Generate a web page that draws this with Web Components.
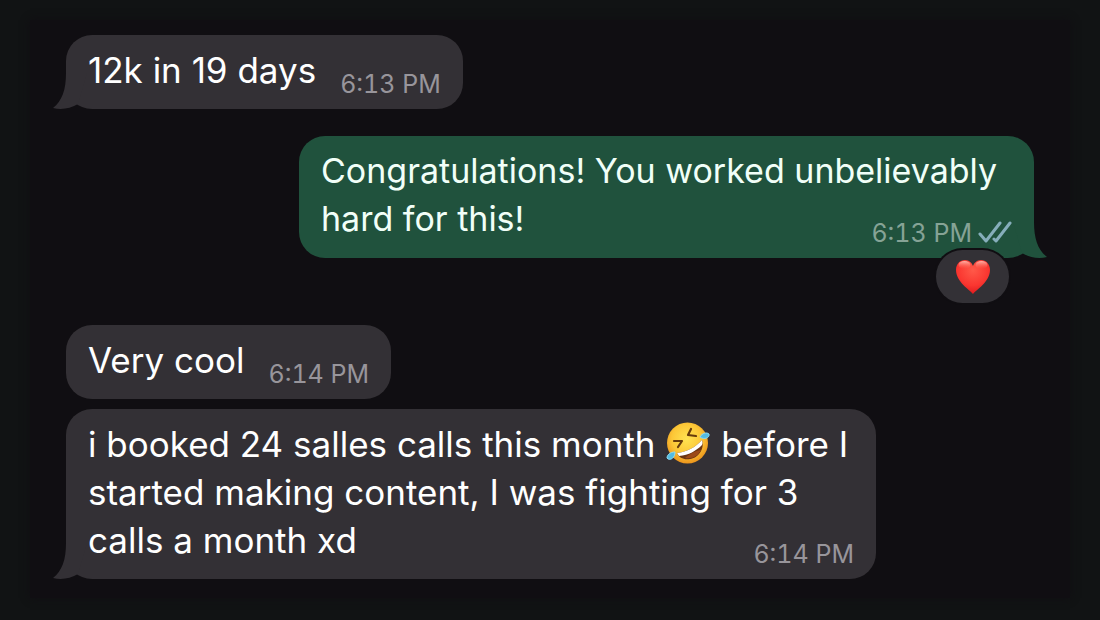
<!DOCTYPE html>
<html lang="en">
<head>
<meta charset="utf-8">
<meta name="viewport" content="width=device-width, initial-scale=1">
<title>Chat</title>
<style>
  body {
    margin: 0;
    background: #111314;
    font-family: Inter, "Liberation Sans", sans-serif;
  }
</style>
</head>
<body>

<chat-thread>
  <chat-bubble tail time="6:13 PM">12k in 19 days</chat-bubble>
  <chat-bubble class="reply" sent tail long read time="6:13 PM">Congratulations! You worked unbelievably hard for this!<heart-reaction slot="reaction"></heart-reaction></chat-bubble>
  <chat-bubble class="later" time="6:14 PM">Very cool</chat-bubble>
  <chat-bubble class="next" tail long time="6:14 PM">i booked 24 salles calls this month <rofl-emoji></rofl-emoji> before I started making content, I was fighting for 3 calls a month xd</chat-bubble>
</chat-thread>

<script>
const threadTemplate = document.createElement("template");
threadTemplate.innerHTML = `
  <style>
    :host {
      display: block;
      box-sizing: border-box;
      min-height: 100vh;
      padding: 20px 30px 22px;
    }
    main {
      display: flex;
      flex-direction: column;
      align-items: flex-start;
      box-sizing: border-box;
      min-height: calc(100vh - 42px);
      padding: 15px 36px 18px;
      background: #100e12;
      box-shadow: 0 0 8px #100e12;
    }
    ::slotted(.reply) {
      align-self: flex-end;
      margin-top: 27px;
      max-width: 735px;
    }
    ::slotted(.later) {
      margin-top: 67px;
    }
    ::slotted(.next) {
      margin-top: 10px;
      max-width: 810px;
    }
  </style>
  <main><slot></slot></main>
`;

const bubbleTemplate = document.createElement("template");
bubbleTemplate.innerHTML = `
  <style>
    :host {
      --fill: #333035;
      --meta: #98959b;
      display: block;
      position: relative;
      box-sizing: border-box;
      padding: 11px 22px 15px;
      border-radius: 26px;
      background: var(--fill);
      color: #fff;
      font-size: 35px;
      line-height: 48px;
    }
    :host([sent]) {
      --fill: #20523d;
      --meta: #86a396;
      color: #f1fff8;
      font-size: 34px;
    }
    .body {
      display: flex;
      align-items: flex-end;
      gap: 24px;
    }
    p {
      margin: 0;
    }
    /* the time shares the last line of a wrapped message */
    :host([long]) .body {
      display: grid;
    }
    :host([long]) p,
    :host([long]) .meta {
      grid-area: 1 / 1;
    }
    .meta {
      display: flex;
      align-items: center;
      justify-self: end;
      gap: 6px;
      color: var(--meta);
      font-size: 25px;
      font-variant-numeric: tabular-nums;
      line-height: 20px;
      white-space: nowrap;
    }
    .ticks {
      display: none;
      width: 34px;
      height: 22px;
      margin: -2px 0 0;
    }
    :host([read]) .ticks {
      display: block;
    }
    .tail {
      display: none;
      position: absolute;
      bottom: 0;
      left: -13px;
      width: 36px;
      height: 36px;
      fill: var(--fill);
    }
    :host([tail]) .tail {
      display: block;
    }
    :host([sent]) .tail {
      left: auto;
      right: -13px;
      transform: scaleX(-1);
    }
    ::slotted([slot="reaction"]) {
      position: absolute;
      right: 25px;
      bottom: -45px;
    }
  </style>
  <svg class="tail" viewBox="0 0 36 36" aria-hidden="true"><path d="M13 0C13 17 9 28 0 35Q13 38 25 31L34 0Z"/></svg>
  <div class="body">
    <p><slot></slot></p>
    <div class="meta">
      <time></time>
      <svg class="ticks" viewBox="0 0 34 22" fill="none" stroke="#86aebb" stroke-width="3" stroke-linecap="round" stroke-linejoin="round" role="img" aria-label="Read"><path d="M2 13L8 20L22 2M16 18L18 20L32 2"/></svg>
    </div>
  </div>
  <slot name="reaction"></slot>
`;

const heartTemplate = document.createElement("template");
heartTemplate.innerHTML = `
  <style>
    :host {
      display: flex;
      align-items: center;
      justify-content: center;
      width: 73px;
      height: 53px;
      border-radius: 27px;
      background: #333136;
      box-shadow: 0 0 0 2px #100e12;
    }
    svg {
      width: 36px;
      height: 36px;
    }
  </style>
  <svg viewBox="0 0 36 36" role="img" aria-label="Red heart">
    <defs>
      <radialGradient id="red" cx=".5" cy=".3" r=".75">
        <stop offset="0" stop-color="#ff5949"/>
        <stop offset=".6" stop-color="#fa3630"/>
        <stop offset="1" stop-color="#d9151b"/>
      </radialGradient>
      <linearGradient id="shine" x2="0" y2="1">
        <stop offset="0" stop-color="#ffc0b5" stop-opacity=".9"/>
        <stop offset="1" stop-color="#ff6a5a" stop-opacity="0"/>
      </linearGradient>
    </defs>
    <path fill="url(#red)" d="M18 35C15 31 1 23 1 11C1 5 5 1 10 1C14 1 17 4 18 7C19 4 22 1 26 1C31 1 35 5 35 11C35 23 21 31 18 35Z"/>
    <ellipse cx="9.500" cy="6" rx="6" ry="4" fill="url(#shine)"/>
    <ellipse cx="26.500" cy="6" rx="6" ry="4" fill="url(#shine)"/>
  </svg>
`;

const roflTemplate = document.createElement("template");
roflTemplate.innerHTML = `
  <style>
    :host {
      display: inline-block;
      width: 46px;
      height: 46px;
      vertical-align: middle;
      margin: -12px 0 -4px;
    }
    svg {
      display: block;
      width: 100%;
      height: 100%;
    }
  </style>
  <svg viewBox="0 0 46 46" role="img" aria-label="Rolling on the floor laughing">
    <defs>
      <radialGradient id="face" cx=".48" cy=".4" r=".6">
        <stop offset="0" stop-color="#ffe352"/>
        <stop offset=".6" stop-color="#fcc737"/>
        <stop offset="1" stop-color="#ec941c"/>
      </radialGradient>
    </defs>
    <circle cx="22.500" cy="23" r="20.500" fill="url(#face)"/>
    <g fill="none" stroke="#673b0c" stroke-width="2.200" stroke-linecap="round" stroke-linejoin="round">
      <path d="M9 21L17 21L13 27"/>
      <path d="M26 9L23 15L31 16"/>
    </g>
    <path fill="#6b3512" d="M12 33C22 32 31 27 37 20C40 29 33 38 25 39C19 40 14 38 12 33Z"/>
    <path fill="#fff" d="M12 33C22 32 31 27 37 20Q38 23 37 25C31 31 24 35 14 36Z"/>
    <path fill="#9c4a18" d="M20 38C24 34 32 30 36 30C33 36 28 39 20 38Z"/>
    <path fill="#55bce2" stroke="#8bdcf3" d="M10 32C5 32 2 35 2 38C4 41 10 39 10 32Z"/>
    <path fill="#55bce2" stroke="#8bdcf3" d="M35 17C37 13 42 12 44 14C45 18 39 20 35 17Z"/>
  </svg>
`;

class ChatThread extends HTMLElement {
  constructor() {
    super();
    this.attachShadow({ mode: "open" });
    this.shadowRoot.appendChild(threadTemplate.content.cloneNode(true));
  }
}

class ChatBubble extends HTMLElement {
  constructor() {
    super();
    this.attachShadow({ mode: "open" });
    this.shadowRoot.appendChild(bubbleTemplate.content.cloneNode(true));
  }

  connectedCallback() {
    this.shadowRoot.querySelector("time").textContent = this.getAttribute("time");
  }
}

class HeartReaction extends HTMLElement {
  constructor() {
    super();
    this.attachShadow({ mode: "open" });
    this.shadowRoot.appendChild(heartTemplate.content.cloneNode(true));
  }
}

class RoflEmoji extends HTMLElement {
  constructor() {
    super();
    this.attachShadow({ mode: "open" });
    this.shadowRoot.appendChild(roflTemplate.content.cloneNode(true));
  }
}

window.customElements.define("chat-thread", ChatThread);
window.customElements.define("chat-bubble", ChatBubble);
window.customElements.define("heart-reaction", HeartReaction);
window.customElements.define("rofl-emoji", RoflEmoji);
</script>
</body>
</html>
